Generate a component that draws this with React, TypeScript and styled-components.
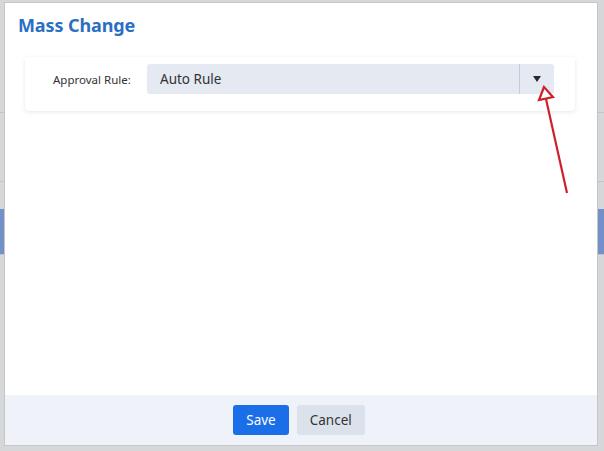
import React from 'react';
import styled, { createGlobalStyle } from 'styled-components';

const GlobalStyle = createGlobalStyle`
  html, body {
    margin: 0;
    padding: 0;
    width: 604px;
    height: 451px;
    overflow: hidden;
    background: #d6d7d9;
    font-family: 'Noto Sans', 'Open Sans', sans-serif;
  }
`;

const Backdrop = styled.div`
  position: relative;
  width: 604px;
  height: 451px;
  background: #d6d7d9;
  display: flex;
  flex-direction: column;
`;

const BackRow = styled.div<{ $height: number; $color?: string; $top?: number }>`
  height: ${(p) => p.$height}px;
  margin-top: ${(p) => p.$top || 0}px;
  background: ${(p) => p.$color || 'transparent'};
  border-bottom: 1px solid #c2c4c7;
`;

const Modal = styled.div`
  position: absolute;
  top: 2px;
  left: 4px;
  width: 594px;
  height: 444px;
  background: #fff;
  border: 1px solid #c4c6c9;
  box-sizing: border-box;
  display: flex;
  flex-direction: column;
`;

const Title = styled.h1`
  margin: 0;
  padding: 10px 0 0 13px;
  height: 44px;
  box-sizing: border-box;
  font-size: 18px;
  font-weight: 700;
  color: #2a6fc2;
  letter-spacing: -0.1px;
`;

const Body = styled.div`
  flex: 1;
  padding: 10px 22px 0 20px;
  position: relative;
`;

const Card = styled.div`
  background: #fff;
  border-radius: 4px;
  box-shadow: 0 1px 4px rgba(60, 70, 90, 0.13);
  height: 54px;
  box-sizing: border-box;
  display: flex;
  align-items: flex-start;
  padding: 7px 21px 0 28px;
  gap: 16px;
`;

const Label = styled.span`
  width: 78px;
  height: 30px;
  display: flex;
  align-items: center;
  font-size: 11.5px;
  color: #333;
  white-space: nowrap;
`;

const Select = styled.div`
  flex: 1;
  height: 30px;
  background: #e4e9f2;
  border-radius: 3px;
  display: flex;
  align-items: stretch;
`;

const SelectValue = styled.span`
  flex: 1;
  display: flex;
  align-items: center;
  padding-left: 13px;
  font-size: 13.5px;
  color: #333;
`;

const ArrowButton = styled.span`
  width: 34px;
  border-left: 1px solid #c6ccd6;
  display: flex;
  align-items: center;
  justify-content: center;
`;

const Caret = styled.span`
  width: 0;
  height: 0;
  border-left: 4px solid transparent;
  border-right: 4px solid transparent;
  border-top: 6px solid #2b2b2b;
`;

const Annotation = styled.svg`
  position: absolute;
  left: 0;
  top: 0;
  pointer-events: none;
`;

const Footer = styled.div`
  height: 50px;
  background: #eff2f9;
  display: flex;
  align-items: center;
  justify-content: center;
  gap: 8px;
  padding-right: 4px;
`;

const FooterButton = styled.button<{ $primary?: boolean }>`
  height: 30px;
  padding: 0 13px;
  border: none;
  border-radius: 3px;
  font-family: 'Noto Sans', 'Open Sans', sans-serif;
  font-size: 13.5px;
  background: ${(p) => (p.$primary ? '#1a6ee8' : '#dce2eb')};
  color: ${(p) => (p.$primary ? '#fff' : '#333')};
`;

export default function App() {
  return (
    <>
      <GlobalStyle />
      <Backdrop>
        <BackRow $height={112} />
        <BackRow $height={68} />
        <BackRow $height={45} $top={27} $color="#7391c8" />
        <Modal>
          <Title>Mass Change</Title>
          <Body>
            <Card>
              <Label>Approval Rule:</Label>
              <Select>
                <SelectValue>Auto Rule</SelectValue>
                <ArrowButton>
                  <Caret />
                </ArrowButton>
              </Select>
            </Card>
            <Annotation width="594" height="350" viewBox="0 0 594 350">
              {/* page coords shifted by modal (5,3) and title height 44 */}
              <g transform="translate(-5,-47)" stroke="#cf1f2c" strokeWidth="2.2" fill="none" strokeLinejoin="miter">
                <line x1="546" y1="99" x2="567" y2="193" />
                <polygon points="544,87 539,100 553,97" fill="#fff" />
              </g>
            </Annotation>
          </Body>
          <Footer>
            <FooterButton $primary>Save</FooterButton>
            <FooterButton>Cancel</FooterButton>
          </Footer>
        </Modal>
      </Backdrop>
    </>
  );
}
